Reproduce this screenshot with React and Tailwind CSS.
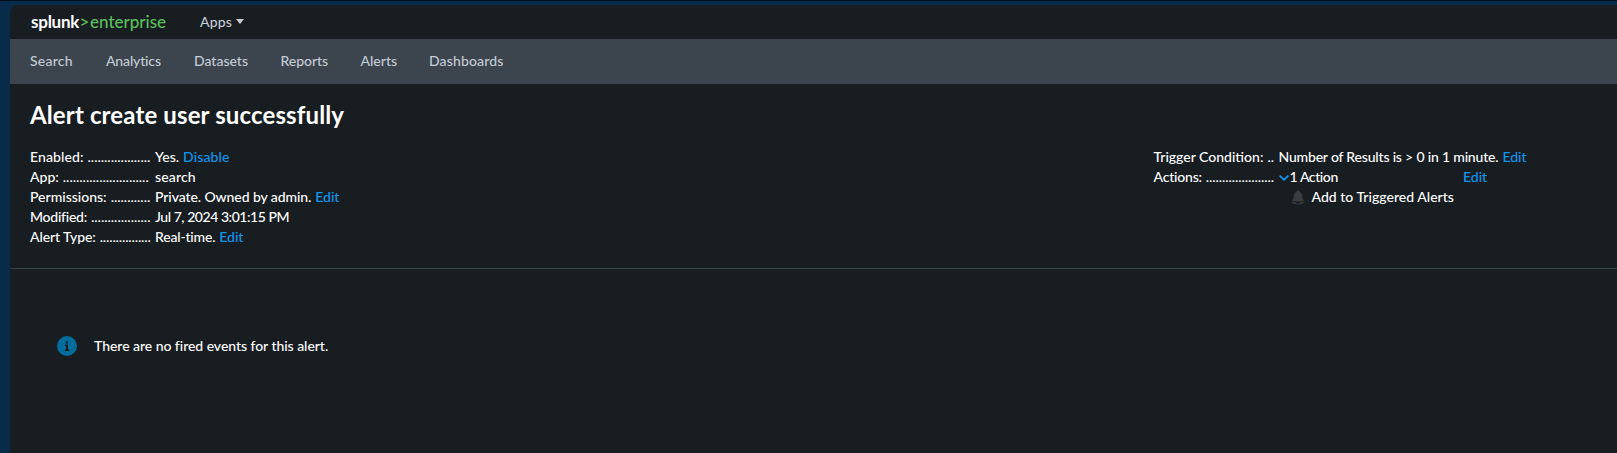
const navItems = [
  { label: "Search", cls: "w-[76px] tracking-[0.25px]" },
  { label: "Analytics", cls: "w-[88px] tracking-[-0.15px]" },
  { label: "Datasets", cls: "w-[86.5px]" },
  { label: "Reports", cls: "w-[80px] tracking-[-0.05px]" },
  { label: "Alerts", cls: "w-[68.5px]" },
  { label: "Dashboards", cls: "tracking-[0.15px]" },
];

const link = "text-[#0f97ee]";

function Row({ label, dots, labelCls = "", dotCls = "", children }) {
  return (
    <div className="flex h-5 items-start whitespace-nowrap">
      <dt className="flex w-[121px] shrink-0">
        <span className={labelCls}>{label}</span>
        <span className={`ml-1 ${dotCls}`}>{".".repeat(dots)}</span>
      </dt>
      <dd className="ml-1 flex items-start">{children}</dd>
    </div>
  );
}

function Bell() {
  return (
    <svg width="14" height="15" viewBox="0 0 14 15" className="ml-3 mr-[7px] mt-[3px] shrink-0" fill="#3a3c3d">
      <path d="M7 .4c-1 0-1.500.7-1.600 1.300C3.500 2.400 2.900 4 2.800 6L2.500 8.400.8 11h12.400L11.500 8.400 11.200 6c-.1-2-.7-3.600-2.600-4.300C8.500 1.100 8 .4 7 .4z" />
      <path d="M.5 11.500c2 1 3.500-.2 6.500-.2s4.500 1.200 6.500.2c-.2 1.800-3 2.900-6.500 2.900S.7 13.300.5 11.500z" />
      <path d="M4 12.200c1.800-.6 4.200-.6 6 0-.5 1-1.700 1.300-3 1.300s-2.500-.3-3-1.300z" fill="#181d21" />
    </svg>
  );
}

export default function App() {
  return (
    <div className="flex h-[453px] w-full flex-col overflow-hidden border-t border-[#020d17] bg-[#072b49] pl-[10px] pt-1 font-['Lato',sans-serif] text-[14px] font-medium leading-[19px] text-white antialiased">
      <div className="flex flex-1 flex-col overflow-hidden rounded-tl-lg bg-[#181d21]">
        <header className="flex h-[34px] items-center pb-px pl-[21px]">
          <div className="flex w-[169px] items-center whitespace-nowrap text-[17px] leading-[21px]">
            <span className="w-[48.5px] font-bold tracking-[-0.25px]">splunk</span>
            <span className="w-[10.500px] text-[#5cc05c]">&gt;</span>
            <span className="text-[#5cc05c]">enterprise</span>
          </div>
          <button className="flex items-center text-[#c3cbd4]">
            <span className="tracking-[0.15px]">Apps</span>
            <svg width="8" height="5" viewBox="0 0 8 5" className="ml-[4px]" fill="currentColor"><path d="M0 0h8L4 5z" /></svg>
          </button>
        </header>
        <nav className="flex h-[45px] items-start whitespace-nowrap bg-[#3c444d] pl-5 pt-3 text-[#c3cbd4]">
          {navItems.map((n) => (
            <a key={n.label} className={n.cls}>{n.label}</a>
          ))}
        </nav>
        <section className="h-[185px] shrink-0 border-b border-[#36454a] px-5 pt-[17px]">
          <h1 className="flex h-7 items-center text-[24px] font-bold leading-7 tracking-[0.13px]">Alert create user successfully</h1>
          <div className="mt-[18px] flex">
            <dl className="w-[1123.5px]">
              <Row label="Enabled:" dots={19} labelCls="tracking-[0.1px]"><span>Yes.</span><a className={`ml-1 tracking-[0.1px] ${link}`}>Disable</a></Row>
              <Row label="App:" dots={26}><span className="tracking-[0.15px]">search</span></Row>
              <Row label="Permissions:" dots={12}><span className="tracking-[-0.08px]">Private. Owned by admin.</span><a className={`ml-1 ${link}`}>Edit</a></Row>
              <Row label="Modified:" dots={18} labelCls="tracking-[-0.25px]"><span className="tracking-[-0.45px]">Jul 7, 2024 3:01:15 PM</span></Row>
              <Row label="Alert Type:" dots={16} labelCls="tracking-[-0.1px]" dotCls="tracking-[-0.12px]"><span className="tracking-[-0.18px]">Real-time.</span><a className={`ml-1 ${link}`}>Edit</a></Row>
            </dl>
            <dl>
              <Row label="Trigger Condition:" dots={2}><span className="tracking-[-0.18px]">Number of Results is &gt; 0 in 1 minute.</span><a className={`ml-1 ${link}`}>Edit</a></Row>
              <Row label="Actions:" dots={21} labelCls="tracking-[-0.2px]" dotCls="tracking-[-0.06px]">
                <span className="flex w-[184.5px] items-start">
                  <svg width="10" height="6" viewBox="0 0 10 6" className="mr-px mt-2" fill="none" stroke="#0f97ee" strokeWidth="1.800"><path d="M.6.6l4.400 4.200L9.400.6" /></svg>
                  <span className="tracking-[-0.4px]">1 Action</span>
                </span>
                <a className={link}>Edit</a>
              </Row>
              <div className="flex h-5 items-start whitespace-nowrap pl-[125px]"><Bell /><span className="tracking-[0.03px]">Add to Triggered Alerts</span></div>
            </dl>
          </div>
        </section>
        <div className="flex items-start pl-[47px] pt-[67px]">
          <svg width="20" height="20" viewBox="0 0 20 20">
            <circle cx="10" cy="10" r="10" fill="#006d9c" />
            <path d="M8.800 5.500h2.200v2h-2.200zM8 8.500h3v5h1.200V15H7.800v-1.500H9V10H8z" fill="#181d21" />
          </svg>
          <span className="ml-[17px] tracking-[-0.04px]">There are no fired events for this alert.</span>
        </div>
      </div>
    </div>
  );
}
